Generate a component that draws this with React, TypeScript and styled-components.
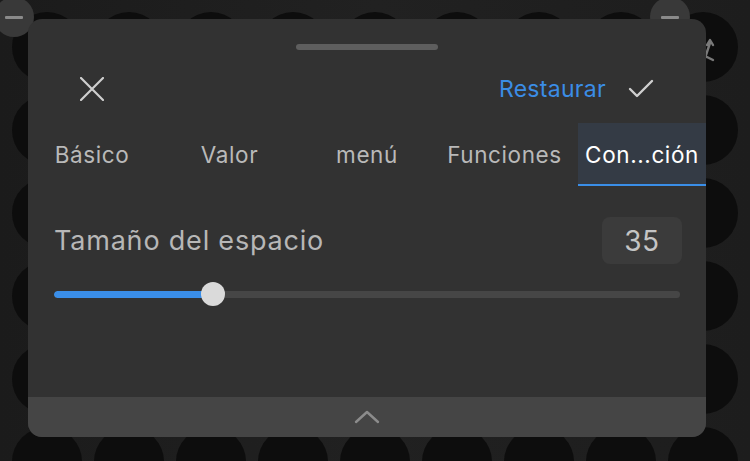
import styled, { createGlobalStyle } from 'styled-components';

const GlobalStyle = createGlobalStyle`
  html, body {
    margin: 0;
    padding: 0;
    background: #1e1e1e;
  }
  * {
    box-sizing: border-box;
  }
`;

const Screen = styled.div`
  position: relative;
  width: 750px;
  height: 461px;
  overflow: hidden;
  background: linear-gradient(90deg, #1b1b1b 0%, #212121 50%, #1d1d1d 100%);
  font-family: Inter, 'Noto Sans', sans-serif;
`;

const CircleGrid = styled.div`
  display: grid;
  grid-template-columns: repeat(9, 70px);
  grid-auto-rows: 70px;
  column-gap: 12px;
  row-gap: 13px;
  padding: 12px 0 0 12px;
`;

const Dot = styled.div`
  width: 70px;
  height: 70px;
  border-radius: 50%;
  background: #0d0d0d;
  display: flex;
  align-items: center;
  justify-content: center;
  color: #7a7a7a;
`;

const MinusBadge = styled.div<{ $left: number }>`
  position: absolute;
  top: -3px;
  left: ${(p) => p.$left}px;
  width: 40px;
  height: 40px;
  border-radius: 50%;
  background: #393939;
  display: flex;
  align-items: center;
  justify-content: center;

  &::after {
    content: '';
    width: 18px;
    height: 3px;
    border-radius: 1px;
    background: #8a8a8a;
  }
`;

const Sheet = styled.div`
  position: absolute;
  left: 28px;
  top: 19px;
  width: 678px;
  height: 418px;
  border-radius: 14px;
  background: #323232;
  overflow: hidden;
  display: flex;
  flex-direction: column;
`;

const Handle = styled.div`
  align-self: center;
  margin-top: 25px;
  width: 142px;
  height: 6px;
  border-radius: 3px;
  background: #5e5e5e;
`;

const Header = styled.div`
  height: 73px;
  padding: 5px 52px 0 52px;
  display: flex;
  align-items: center;
  justify-content: space-between;
`;

const IconButton = styled.div`
  width: 24px;
  height: 24px;
  display: flex;
  align-items: center;
  justify-content: center;
  color: #cfcfcf;
`;

const Actions = styled.div`
  display: flex;
  align-items: center;
  gap: 22px;
`;

const ResetLink = styled.span`
  font-size: 23px;
  color: #3b8de6;
  letter-spacing: 0.3px;
`;

const Tabs = styled.div`
  display: flex;
  gap: 9.5px;
  height: 63px;
`;

const Tab = styled.div<{ $active?: boolean }>`
  flex: 0 0 128px;
  display: flex;
  align-items: center;
  justify-content: center;
  font-size: 22.5px;
  letter-spacing: 0.6px;
  white-space: nowrap;
  color: ${(p) => (p.$active ? '#ffffff' : '#b9b9b9')};
  background: ${(p) => (p.$active ? '#343b45' : 'transparent')};
  border-bottom: 2px solid ${(p) => (p.$active ? '#3a8ee8' : 'transparent')};
  padding-top: 2px;
`;

const Body = styled.div`
  flex: 1;
  padding: 31px 24px 0 26px;
  display: flex;
  flex-direction: column;
`;

const FieldRow = styled.div`
  display: flex;
  align-items: center;
  justify-content: space-between;
  height: 47px;
`;

const FieldLabel = styled.span`
  font-size: 27px;
  letter-spacing: 0.8px;
  color: #b7b7b7;
`;

const ValueBox = styled.div`
  width: 80px;
  height: 47px;
  border-radius: 8px;
  background: #3b3b3b;
  display: flex;
  align-items: center;
  justify-content: center;
  font-size: 28px;
  letter-spacing: 0.5px;
  color: #c4c4c4;
`;

const Slider = styled.div`
  position: relative;
  margin-top: 18px;
  margin-right: 2px;
  height: 24px;
  display: flex;
  align-items: center;
`;

const Track = styled.div`
  width: 100%;
  height: 7px;
  border-radius: 4px;
  background: #464646;
  overflow: hidden;
`;

const Fill = styled.div`
  height: 100%;
  border-radius: 4px;
  background: #3a8ee8;
`;

const Thumb = styled.div`
  position: absolute;
  top: 0;
  width: 24px;
  height: 24px;
  margin-left: -12px;
  border-radius: 50%;
  background: #dadada;
`;

const BottomBar = styled.div`
  height: 40px;
  background: #454545;
  display: flex;
  align-items: center;
  justify-content: center;
  color: #8c8c8c;
`;

const tabs = ['Básico', 'Valor', 'menú', 'Funciones', 'Con...ción'];

const XIcon = () => (
  <svg width="24" height="24" viewBox="0 0 24 24" fill="none" stroke="currentColor" strokeWidth="2.2" strokeLinecap="round">
    <path d="M1 1 L23 23 M23 1 L1 23" />
  </svg>
);

const CheckIcon = () => (
  <svg width="26" height="20" viewBox="0 0 26 20" fill="none" stroke="#cfcfcf" strokeWidth="2.4" strokeLinecap="round" strokeLinejoin="round">
    <path d="M2 10 L9 17 L24 2" />
  </svg>
);

const ShuffleIcon = () => (
  <svg width="30" height="30" viewBox="0 0 30 30" fill="none" stroke="currentColor" strokeWidth="2.4" strokeLinecap="round" strokeLinejoin="round" style={{ marginLeft: 10, marginTop: 4 }}>
    <path d="M4 18 L20 26 M12 24 L17 9 M14 11 L17 6 L20 11" />
  </svg>
);

const ChevronUp = () => (
  <svg width="26" height="14" viewBox="0 0 26 14" fill="none" stroke="currentColor" strokeWidth="2.4" strokeLinecap="round" strokeLinejoin="round">
    <path d="M2 12 L13 2 L24 12" />
  </svg>
);

const App = () => {
  const value = 35;
  const percent = 25.4;
  return (
    <>
      <GlobalStyle />
      <Screen>
        <CircleGrid>
          {Array.from({ length: 54 }).map((_, i) => (
            <Dot key={i}>{i === 8 ? <ShuffleIcon /> : null}</Dot>
          ))}
        </CircleGrid>
        <MinusBadge $left={-6} />
        <MinusBadge $left={650} />

        <Sheet>
          <Handle />
          <Header>
            <IconButton>
              <XIcon />
            </IconButton>
            <Actions>
              <ResetLink>Restaurar</ResetLink>
              <CheckIcon />
            </Actions>
          </Header>
          <Tabs>
            {tabs.map((t, i) => (
              <Tab key={t} $active={i === tabs.length - 1}>
                {t}
              </Tab>
            ))}
          </Tabs>
          <Body>
            <FieldRow>
              <FieldLabel>Tamaño del espacio</FieldLabel>
              <ValueBox>{value}</ValueBox>
            </FieldRow>
            <Slider>
              <Track>
                <Fill style={{ width: `${percent}%` }} />
              </Track>
              <Thumb style={{ left: `${percent}%` }} />
            </Slider>
          </Body>
          <BottomBar>
            <ChevronUp />
          </BottomBar>
        </Sheet>
      </Screen>
    </>
  );
};

export default App;
